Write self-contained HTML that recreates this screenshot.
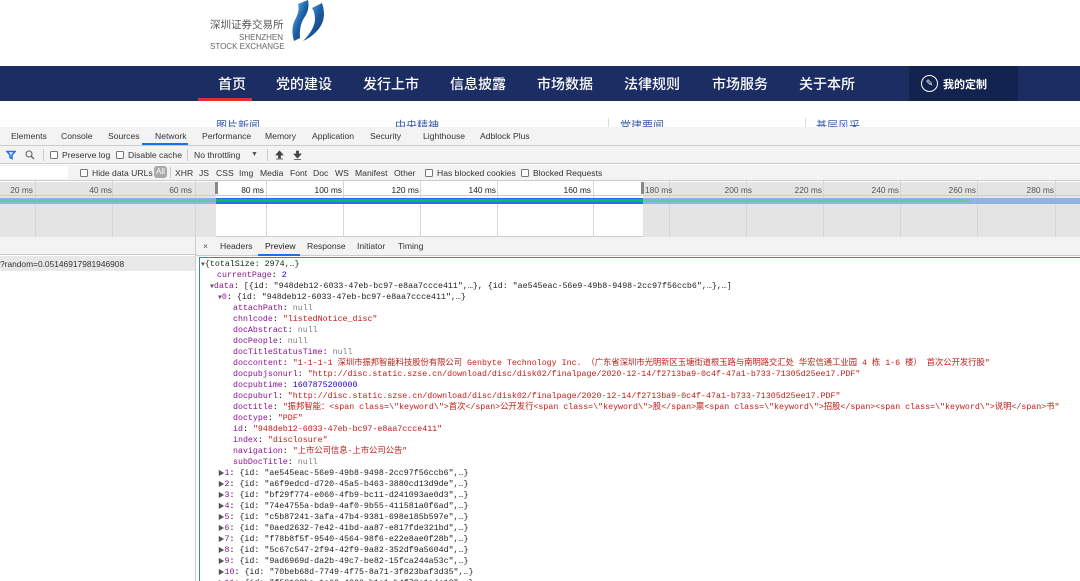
<!DOCTYPE html>
<html><head><meta charset="utf-8"><style>
*{margin:0;padding:0;box-sizing:border-box}
html,body{width:1080px;height:581px;overflow:hidden}
body{background:#fff;position:relative;font-family:"Liberation Sans","Noto Sans CJK SC",sans-serif}
.a{position:absolute;white-space:nowrap}
.nav{left:0;top:66px;width:1080px;height:35px;background:#1b2d63}
.nav span{position:absolute;top:8px;color:#fff;font-size:14px;font-family:"Liberation Sans","Noto Sans CJK SC",sans-serif;font-weight:500}
.dt{font-size:8.6px;color:#333}
.cb{display:inline-block;width:8px;height:8px;border:1px solid #777;border-radius:1.5px;background:#fff;position:absolute}
.mono{font-family:"Liberation Mono","Noto Sans CJK SC",monospace;font-size:8.3px;line-height:11px}
.k{color:#881391}.s{color:#c41a16}.n{color:#808080}.num{color:#1c00cf}.p{color:#222}
.tri{color:#555;font-size:6.5px}
.vl{position:absolute;top:181px;width:1px;height:56px;background:#d6d6d6}
.lbl{position:absolute;top:185px;font-size:8.4px;color:#555;text-align:right;width:50px}
</style></head><body>
<!-- header -->
<div class="a" style="left:210px;top:17px;font-size:10.5px;color:#555">深圳证券交易所</div>
<div class="a" style="left:239px;top:33px;font-size:8px;color:#666">SHENZHEN</div>
<div class="a" style="left:210px;top:42px;font-size:8px;color:#666">STOCK EXCHANGE</div>
<svg class="a" style="left:290px;top:0" width="42" height="44" viewBox="0 0 42 44">
<defs><linearGradient id="g" x1="0" y1="0" x2="1" y2="1"><stop offset="0" stop-color="#7fc6ee"/><stop offset=".5" stop-color="#1a5fa8"/><stop offset="1" stop-color="#1b2d63"/></linearGradient></defs>
<path d="M8 4 L18 0 Q20 10 14 18 Q9 26 10 38 L4 41 Q0 28 6 18 Q10 10 8 4Z" fill="url(#g)"/>
<path d="M22 8 L32 3 Q38 20 26 32 Q20 38 13 41 Q24 30 25 20 Q25 12 22 8Z" fill="url(#g)"/>
</svg>
<div class="a nav">
<span style="left:218px">首页</span>
<div class="a" style="left:198px;top:32px;width:54px;height:3px;background:#e03131"></div>
<span style="left:276px">党的建设</span>
<span style="left:363px">发行上市</span>
<span style="left:450px">信息披露</span>
<span style="left:537px">市场数据</span>
<span style="left:624px">法律规则</span>
<span style="left:712px">市场服务</span>
<span style="left:799px">关于本所</span>
<div class="a" style="left:909px;top:0;width:109px;height:35px;background:#13234f"></div>
<div class="a" style="left:921px;top:9px;width:17px;height:17px;border:1.5px solid #fff;border-radius:50%;color:#fff;font-size:9px;text-align:center;line-height:14px">✎</div>
<span style="left:943px;top:10px;font-size:11px;font-weight:bold">我的定制</span>
</div>
<div class="a" style="left:216px;top:117px;font-size:11px;color:#3a5ca8;height:10px;overflow:hidden">图片新闻</div>
<div class="a" style="left:395px;top:117px;font-size:11px;color:#3a5ca8;height:10px;overflow:hidden">中央精神</div>
<div class="a" style="left:620px;top:117px;font-size:11px;color:#3a5ca8;height:10px;overflow:hidden">党建要闻</div>
<div class="a" style="left:816px;top:117px;font-size:11px;color:#3a5ca8;height:10px;overflow:hidden">基层风采</div>
<div class="a" style="left:608px;top:118px;width:1px;height:9px;background:#ddd"></div>
<div class="a" style="left:805px;top:118px;width:1px;height:9px;background:#ddd"></div>
<!-- devtools tabs -->
<div class="a" style="left:0;top:127px;width:1080px;height:19px;background:#f3f3f3;border-bottom:1px solid #ccc"></div>
<div class="a dt" style="left:11px;top:131px">Elements</div>
<div class="a dt" style="left:61px;top:131px">Console</div>
<div class="a dt" style="left:108px;top:131px">Sources</div>
<div class="a dt" style="left:155px;top:131px">Network</div>
<div class="a" style="left:142px;top:143px;width:46px;height:2px;background:#1a73e8"></div>
<div class="a dt" style="left:202px;top:131px">Performance</div>
<div class="a dt" style="left:265px;top:131px">Memory</div>
<div class="a dt" style="left:312px;top:131px">Application</div>
<div class="a dt" style="left:370px;top:131px">Security</div>
<div class="a dt" style="left:423px;top:131px">Lighthouse</div>
<div class="a dt" style="left:480px;top:131px">Adblock Plus</div>
<!-- toolbar -->
<div class="a" style="left:0;top:146px;width:1080px;height:18px;background:#f3f3f3;border-bottom:1px solid #ccc"></div>
<svg class="a" style="left:6px;top:150px" width="10" height="10"><path d="M1 1.5H9L6 5V8.5L4 7.5V5Z" fill="none" stroke="#1a73e8" stroke-width="1.5"/></svg>
<svg class="a" style="left:25px;top:150px" width="10" height="10"><circle cx="4" cy="4" r="3" fill="none" stroke="#666" stroke-width="1.1"/><path d="M6 6L9 9" stroke="#666" stroke-width="1.3"/></svg>
<div class="a" style="left:43px;top:149px;width:1px;height:12px;background:#ccc"></div>
<span class="cb" style="left:50px;top:151px"></span><div class="a dt" style="left:62px;top:150px">Preserve log</div>
<span class="cb" style="left:116px;top:151px"></span><div class="a dt" style="left:128px;top:150px">Disable cache</div>
<div class="a" style="left:187px;top:149px;width:1px;height:12px;background:#ccc"></div>
<div class="a dt" style="left:194px;top:150px">No throttling</div>
<div class="a" style="left:251px;top:151px;font-size:7px;color:#555">▼</div>
<div class="a" style="left:267px;top:149px;width:1px;height:12px;background:#ccc"></div>
<svg class="a" style="left:275px;top:150px" width="9" height="10"><path d="M4.5 1L1 5H3.5V8H5.5V5H8Z M1 9H8" fill="#444" stroke="#444" stroke-width=".8"/></svg>
<svg class="a" style="left:293px;top:150px" width="9" height="10"><path d="M4.5 8L1 4H3.5V1H5.5V4H8Z M1 9.5H8" fill="#444" stroke="#444" stroke-width=".8"/></svg>
<!-- filter row -->
<div class="a" style="left:0;top:165px;width:1080px;height:16px;background:#f3f3f3;border-bottom:1px solid #ccc"></div>
<div class="a" style="left:0;top:166px;width:68px;height:13px;background:#fff"></div>
<span class="cb" style="left:80px;top:169px"></span><div class="a dt" style="left:92px;top:168px">Hide data URLs</div>
<div class="a" style="left:154px;top:166px;width:13px;height:12px;background:#aaa;border-radius:3px;color:#fff;font-size:8px;text-align:center;line-height:12px">All</div>
<div class="a" style="left:170px;top:167px;width:1px;height:11px;background:#ccc"></div>
<div class="a dt" style="left:175px;top:168px">XHR</div>
<div class="a dt" style="left:199px;top:168px">JS</div>
<div class="a dt" style="left:216px;top:168px">CSS</div>
<div class="a dt" style="left:239px;top:168px">Img</div>
<div class="a dt" style="left:260px;top:168px">Media</div>
<div class="a dt" style="left:290px;top:168px">Font</div>
<div class="a dt" style="left:313px;top:168px">Doc</div>
<div class="a dt" style="left:335px;top:168px">WS</div>
<div class="a dt" style="left:355px;top:168px">Manifest</div>
<div class="a dt" style="left:394px;top:168px">Other</div>
<span class="cb" style="left:425px;top:169px"></span><div class="a dt" style="left:437px;top:168px">Has blocked cookies</div>
<span class="cb" style="left:521px;top:169px"></span><div class="a dt" style="left:533px;top:168px">Blocked Requests</div>
<!-- timeline -->
<div class="a" style="left:0;top:182px;width:1080px;height:55px;background:#fff;border-bottom:1px solid #ccc"></div>
<div class="a" style="left:0;top:182px;width:216px;height:55px;background:#e4e4e4"></div>
<div class="a" style="left:643px;top:182px;width:437px;height:55px;background:#e4e4e4"></div>
<div class="vl" style="left:35px"></div><div class="vl" style="left:112px"></div><div class="vl" style="left:195px"></div>
<div class="vl" style="left:266px"></div><div class="vl" style="left:343px"></div><div class="vl" style="left:420px"></div>
<div class="vl" style="left:497px"></div><div class="vl" style="left:593px"></div><div class="vl" style="left:669px"></div>
<div class="vl" style="left:746px"></div><div class="vl" style="left:823px"></div><div class="vl" style="left:900px"></div>
<div class="vl" style="left:977px"></div><div class="vl" style="left:1055px"></div>
<div class="a" style="left:0;top:195px;width:1080px;height:1px;background:#ccc"></div>
<div class="lbl" style="left:-17px">20 ms</div><div class="lbl" style="left:62px">40 ms</div><div class="lbl" style="left:142px">60 ms</div>
<div class="lbl" style="left:214px;color:#222">80 ms</div><div class="lbl" style="left:292px;color:#222">100 ms</div><div class="lbl" style="left:369px;color:#222">120 ms</div>
<div class="lbl" style="left:446px;color:#222">140 ms</div><div class="lbl" style="left:541px;color:#222">160 ms</div>
<div class="lbl" style="left:645px;text-align:left">180 ms</div>
<div class="lbl" style="left:702px">200 ms</div><div class="lbl" style="left:772px">220 ms</div><div class="lbl" style="left:849px">240 ms</div>
<div class="lbl" style="left:926px">260 ms</div><div class="lbl" style="left:1004px">280 ms</div>
<div class="a" style="left:215px;top:182px;width:3px;height:12px;background:#888"></div>
<div class="a" style="left:641px;top:182px;width:3px;height:12px;background:#888"></div>
<div class="a" style="left:0;top:198px;width:1080px;height:6px;background:#8eb3e4"></div>
<div class="a" style="left:0;top:199px;width:970px;height:3px;background:#6cc79a"></div>
<div class="a" style="left:216px;top:198px;width:427px;height:6px;background:#1a73e8"></div>
<div class="a" style="left:216px;top:199px;width:427px;height:3px;background:#0fb85c"></div>
<!-- lower panels -->
<div class="a" style="left:0;top:237px;width:196px;height:18px;background:#f3f3f3;border-bottom:1px solid #ccc"></div>
<div class="a" style="left:0;top:256px;width:196px;height:15px;background:#e8e8e8"></div>
<div class="a" style="left:0;top:259px;font-size:8.4px;color:#333">?random=0.05146917981946908</div>
<div class="a" style="left:195px;top:237px;width:1px;height:344px;background:#ccc"></div>
<div class="a" style="left:196px;top:237px;width:884px;height:19px;background:#f3f3f3;border-bottom:1px solid #ccc"></div>
<div class="a dt" style="left:203px;top:241px;color:#555">×</div>
<div class="a dt" style="left:220px;top:241px">Headers</div>
<div class="a dt" style="left:265px;top:241px;color:#222">Preview</div>
<div class="a" style="left:258px;top:254px;width:42px;height:2px;background:#1a73e8"></div>
<div class="a dt" style="left:307px;top:241px">Response</div>
<div class="a dt" style="left:357px;top:241px">Initiator</div>
<div class="a dt" style="left:398px;top:241px">Timing</div>
<div class="a" style="left:199px;top:257px;width:890px;height:330px;border:1px solid #3b7ddd"></div>
<div class="a mono" style="left:201px;top:259px">
<div><span class="tri">▼</span><span class="p">{totalSize: 2974,…}</span></div>
<div style="padding-left:16px"><span class="k">currentPage</span>: <span class="num">2</span></div>
<div style="padding-left:9px"><span class="tri">▼</span><span class="k">data</span>: <span class="p">[{id: "948deb12-6033-47eb-bc97-e8aa7ccce411",…}, {id: "ae545eac-56e9-49b8-9498-2cc97f56ccb6",…},…]</span></div>
<div style="padding-left:17px"><span class="tri">▼</span><span class="k">0</span>: <span class="p">{id: "948deb12-6033-47eb-bc97-e8aa7ccce411",…}</span></div>
<div style="padding-left:32px">
<div><span class="k">attachPath</span>: <span class="n">null</span></div>
<div><span class="k">chnlcode</span>: <span class="s">"listedNotice_disc"</span></div>
<div><span class="k">docAbstract</span>: <span class="n">null</span></div>
<div><span class="k">docPeople</span>: <span class="n">null</span></div>
<div><span class="k">docTitleStatusTime</span>: <span class="n">null</span></div>
<div><span class="k">doccontent</span>: <span class="s">"1-1-1-1 深圳市振邦智能科技股份有限公司 Genbyte Technology Inc. （广东省深圳市光明新区玉塘街道根玉路与南明路交汇处 华宏信通工业园 4 栋 1-6 楼） 首次公开发行股"</span></div>
<div><span class="k">docpubjsonurl</span>: <span class="s">"http://disc.static.szse.cn/download/disc/disk02/finalpage/2020-12-14/f2713ba9-0c4f-47a1-b733-71305d25ee17.PDF"</span></div>
<div><span class="k">docpubtime</span>: <span class="num">1607875200000</span></div>
<div><span class="k">docpuburl</span>: <span class="s">"http://disc.static.szse.cn/download/disc/disk02/finalpage/2020-12-14/f2713ba9-0c4f-47a1-b733-71305d25ee17.PDF"</span></div>
<div><span class="k">doctitle</span>: <span class="s">"振邦智能：&lt;span class=\"keyword\"&gt;首次&lt;/span&gt;公开发行&lt;span class=\"keyword\"&gt;股&lt;/span&gt;票&lt;span class=\"keyword\"&gt;招股&lt;/span&gt;&lt;span class=\"keyword\"&gt;说明&lt;/span&gt;书"</span></div>
<div><span class="k">doctype</span>: <span class="s">"PDF"</span></div>
<div><span class="k">id</span>: <span class="s">"948deb12-6033-47eb-bc97-e8aa7ccce411"</span></div>
<div><span class="k">index</span>: <span class="s">"disclosure"</span></div>
<div><span class="k">navigation</span>: <span class="s">"上市公司信息-上市公司公告"</span></div>
<div><span class="k">subDocTitle</span>: <span class="n">null</span></div>
</div>
<div style="padding-left:17px">
<div><span class="tri">▶</span><span class="k">1</span>: <span class="p">{id: "ae545eac-56e9-49b8-9498-2cc97f56ccb6",…}</span></div>
<div><span class="tri">▶</span><span class="k">2</span>: <span class="p">{id: "a6f9edcd-d720-45a5-b463-3880cd13d9de",…}</span></div>
<div><span class="tri">▶</span><span class="k">3</span>: <span class="p">{id: "bf29f774-e060-4fb9-bc11-d241093ae0d3",…}</span></div>
<div><span class="tri">▶</span><span class="k">4</span>: <span class="p">{id: "74e4755a-bda9-4af0-9b55-411581a0f6ad",…}</span></div>
<div><span class="tri">▶</span><span class="k">5</span>: <span class="p">{id: "c5b87241-3afa-47b4-9381-698e185b597e",…}</span></div>
<div><span class="tri">▶</span><span class="k">6</span>: <span class="p">{id: "0aed2632-7e42-41bd-aa87-e817fde321bd",…}</span></div>
<div><span class="tri">▶</span><span class="k">7</span>: <span class="p">{id: "f78b8f5f-9540-4564-98f6-e22e8ae0f28b",…}</span></div>
<div><span class="tri">▶</span><span class="k">8</span>: <span class="p">{id: "5c67c547-2f94-42f9-9a82-352df9a5604d",…}</span></div>
<div><span class="tri">▶</span><span class="k">9</span>: <span class="p">{id: "9ad6969d-da2b-49c7-be82-15fca244a53c",…}</span></div>
<div><span class="tri">▶</span><span class="k">10</span>: <span class="p">{id: "70beb68d-7749-4f75-8a71-3f823baf3d35",…}</span></div>
<div><span class="tri">▶</span><span class="k">11</span>: <span class="p">{id: "f58163ba-1e60-4000-b1a1-b4f72e1a4c10",…}</span></div>
</div>
</div>
</body></html>
